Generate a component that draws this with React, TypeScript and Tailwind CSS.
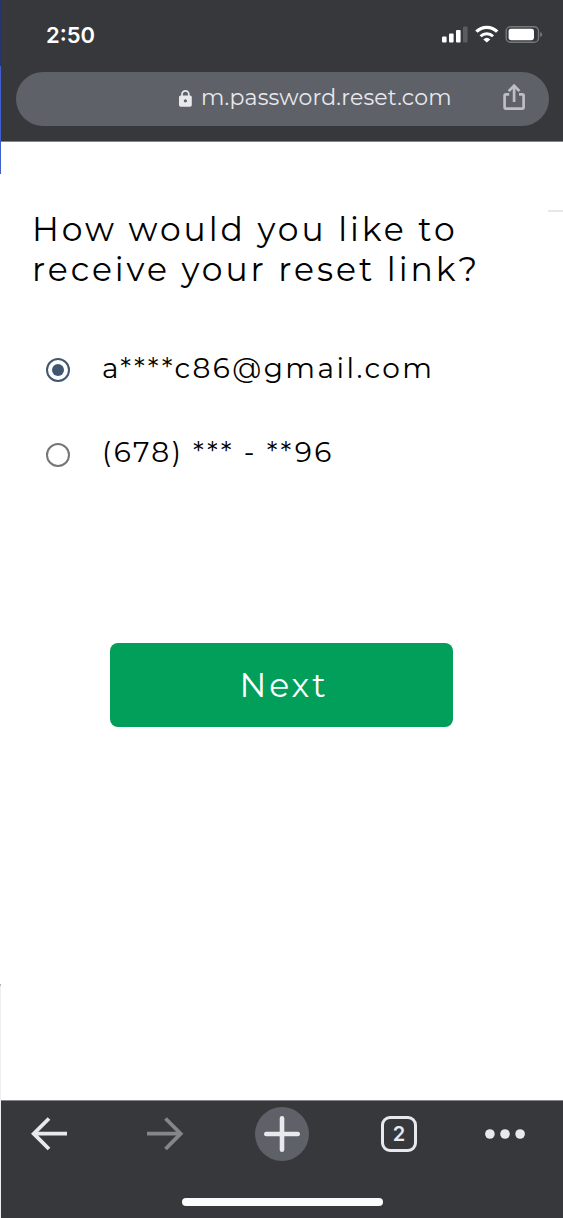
import React, { useState } from 'react';

type Method = 'email' | 'phone';

const StatusIcons: React.FC = () => (
  <svg className="w-[102px] h-5" viewBox="441 25 102 20" fill="none">
    {/* Signal */}
    <rect x="442" y="36.5" width="4.6" height="6" rx="1" fill="#fff" />
    <rect x="449" y="33.5" width="4.6" height="9" rx="1" fill="#fff" />
    <rect x="456" y="30" width="4.6" height="12.5" rx="1" fill="#fff" />
    <rect x="463" y="26.5" width="4.6" height="16" rx="1" fill="#5b5c5f" />
    {/* Wifi */}
    <path d="M476.4 31.6a14.8 14.8 0 0 1 20.8 0" stroke="#fff" strokeWidth="3.4" />
    <path d="M480.6 36.2a8.8 8.8 0 0 1 12.4 0" stroke="#fff" strokeWidth="3" />
    <path d="M483.3 39.4a5.2 5.2 0 0 1 7 0L486.8 42.6Z" fill="#fff" />
    {/* Battery */}
    <rect x="506.2" y="26.7" width="32.3" height="15.6" rx="4.4" stroke="#77787b" strokeWidth="1.4" />
    <rect x="508.6" y="28.8" width="25.4" height="11.4" rx="2.4" fill="#fff" />
    <path d="M540.2 32c2.6.8 2.6 4.2 0 5Z" fill="#77787b" />
  </svg>
);

const LockIcon: React.FC = () => (
  <svg className="w-[13px] h-[17px]" viewBox="0 0 13 17" fill="none">
    <path d="M3 6V4.3a3.4 3.4 0 0 1 6.8 0V6" stroke="#e8e9ed" strokeWidth="1.7" />
    <rect y="5.4" width="12.8" height="11.4" rx="1.7" fill="#e8e9ed" />
    <circle cx="6.4" cy="10.8" r="1.6" fill="#5f6168" />
  </svg>
);

const ShareIcon: React.FC = () => (
  <svg className="w-6 h-7" viewBox="502 83 24 28" fill="none" stroke="#bdbfc4" strokeWidth="2.7">
    <path d="M509.2 94.3H506a1.4 1.4 0 0 0-1.4 1.4v11.6a1.4 1.4 0 0 0 1.4 1.4h16.2a1.4 1.4 0 0 0 1.4-1.4V95.7a1.4 1.4 0 0 0-1.4-1.4h-3.2" />
    <path d="M514.1 102V86.5" />
    <path d="M508.7 91.1 514.1 85.7l5.4 5.4" />
  </svg>
);

interface RadioOptionProps {
  label: string;
  className: string;
  checked: boolean;
  onSelect: () => void;
}

const RadioOption: React.FC<RadioOptionProps> = ({ label, className, checked, onSelect }) => (
  <button
    role="radio"
    aria-checked={checked}
    onClick={onSelect}
    className="flex items-center h-10 w-full text-left"
  >
    <span
      className={`w-6 h-6 mt-[3px] mr-8 shrink-0 rounded-full border-2 flex items-center justify-center ${
        checked ? 'border-[#41566f]' : 'border-[#767676]'
      }`}
    >
      {checked && <span className="w-3 h-3 rounded-full bg-[#41566f]" />}
    </span>
    <span className={`whitespace-nowrap ${className}`}>{label}</span>
  </button>
);

export default function App() {
  const [method, setMethod] = useState<Method>('email');

  return (
    <div className="w-[563px] h-[1218px] flex overflow-hidden bg-white text-black font-['Montserrat','Inter',sans-serif]">
      {/* Left edge */}
      <div className="w-px shrink-0 flex flex-col">
        <div className="h-[66px] bg-[#25346c]" />
        <div className="h-[108px] bg-[#3f5fcf]" />
        <div className="h-[810px]" />
        <div className="h-0.5 bg-[#b5b5b5]" />
        <div className="flex-1 bg-[#eeeeee]" />
      </div>

      <div className="flex-1 min-w-0 flex flex-col">
        {/* Browser header */}
        <header className="h-[142px] shrink-0 bg-[#37383b] border-b border-[#858386]">
          <div className="h-[72px] flex items-start justify-between pt-[25px] pl-[45px] pr-5">
            <span className="font-['Inter',sans-serif] text-[22px] leading-5 font-semibold text-white">
              2:50
            </span>
            <StatusIcons />
          </div>
          <div className="h-[54px] ml-[15px] mr-3.5 rounded-full bg-[#5f6168] flex items-center pl-[163px] pr-[23px]">
            <span className="-mt-px">
              <LockIcon />
            </span>
            <span className="ml-[9px] -mt-1 whitespace-nowrap text-[22px] font-normal tracking-[0.2px] text-[#e8e9ed]">
              m.password.reset.com
            </span>
            <span className="ml-auto -mt-1">
              <ShareIcon />
            </span>
          </div>
        </header>

        {/* Page content */}
        <main className="flex-1 flex flex-col">
          <div className="h-[68px] shrink-0 flex flex-col items-end justify-end">
            <div className="w-[15px] h-0.5 translate-y-0.5 bg-[#e6e7ea]" />
          </div>
          <h1 className="-mt-px pl-[31px] text-[33px] leading-10 font-normal tracking-[2.95px] whitespace-nowrap">
            How would you like to
            <br />
            receive your reset link?
          </h1>

          <div role="radiogroup" className="pl-[45px] mt-[59px] flex flex-col gap-[45px]">
            <RadioOption
              label="a****c86@gmail.com"
              className="text-[28px] font-normal tracking-[2.45px]"
              checked={method === 'email'}
              onSelect={() => setMethod('email')}
            />
            <RadioOption
              label="(678) *** - **96"
              className="-mt-0.5 text-[28px] font-normal tracking-[2.45px]"
              checked={method === 'phone'}
              onSelect={() => setMethod('phone')}
            />
          </div>

          <button className="w-[343px] h-[84px] ml-[109px] mt-[170px] rounded-lg bg-[#029f5b] text-white text-[33px] font-normal tracking-[2.95px] pt-0.5 pl-[5px]">
            Next
          </button>
        </main>

        {/* Browser toolbar */}
        <footer className="h-[118px] shrink-0 bg-[#37383b] border-t border-[#858689] flex flex-col">
          <div className="h-[66px] flex items-center pl-[29px]">
            <svg className="w-[38px] h-[34px]" viewBox="30 1117 38 34" fill="none" stroke="#e8e9ed" strokeWidth="3.8">
              <path d="M67 1133.7H34" />
              <path d="M49 1118.5 33.7 1133.7 49 1149" />
            </svg>
            <svg className="w-[38px] h-[34px] ml-[78px]" viewBox="146 1117 38 34" fill="none" stroke="#858689" strokeWidth="3.8">
              <path d="M147 1133.7h33" />
              <path d="M165.5 1118.5l15.2 15.2L165.5 1149" />
            </svg>
            <div className="w-[54px] h-[54px] ml-[71.4px] rounded-full bg-[#5f6168] flex items-center justify-center">
              <svg className="w-9 h-9" viewBox="0 0 36 36" stroke="#e8e9ed" strokeWidth="4.6" strokeLinecap="round">
                <path d="M18 2.3v31.4M2.3 18h31.4" />
              </svg>
            </div>
            <div className="w-9 h-9 ml-[71.6px] rounded-[9px] border-[3.5px] border-[#e8e9ed] flex items-center justify-center font-['Inter',sans-serif] text-[20px] leading-none font-semibold text-[#e8e9ed]">
              2
            </div>
            <svg className="w-10 h-2.5 ml-[68px]" viewBox="0 0 40 10" fill="#e8e9ed">
              <circle cx="4.9" cy="5" r="4.8" />
              <circle cx="20" cy="5" r="4.8" />
              <circle cx="35.1" cy="5" r="4.8" />
            </svg>
          </div>
          <div className="w-[201px] h-2 ml-[181px] mt-[31px] rounded-full bg-[#fdfcfc]" />
        </footer>
      </div>
    </div>
  );
}
